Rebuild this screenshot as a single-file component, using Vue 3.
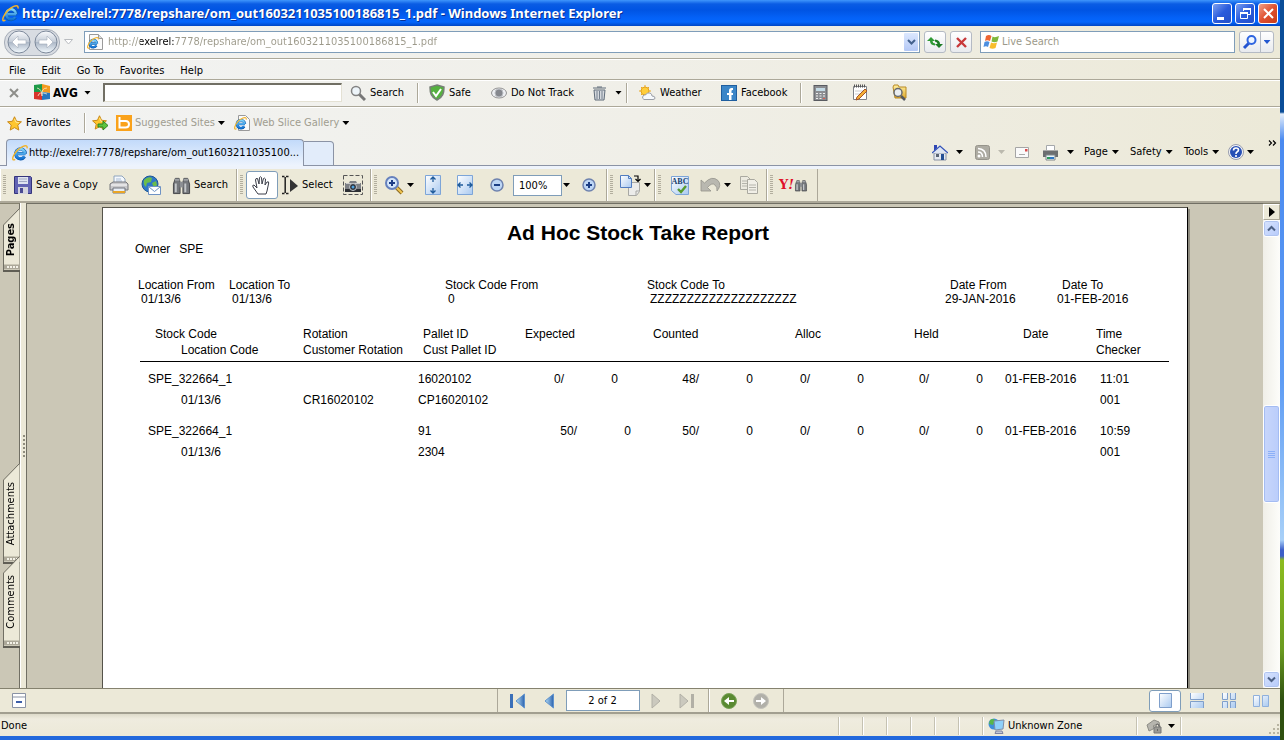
<script setup>
const address = 'http://exelrel:7778/repshare/om_out1603211035100186815_1.pdf'
const menus = ['File', 'Edit', 'Go To', 'Favorites', 'Help']
const filters = [
  { label: 'Location From', value: '01/13/6' },
  { label: 'Location To', value: '01/13/6' },
  { label: 'Stock Code From', value: '0' },
  { label: 'Stock Code To', value: 'ZZZZZZZZZZZZZZZZZZZZ' },
  { label: 'Date From', value: '29-JAN-2016', date: true },
  { label: 'Date To', value: '01-FEB-2016', date: true },
]
const records = [
  { code: 'SPE_322664_1', pallet: '16020102', exp: '0/', inset: true, cnt: '48/', date: '01-FEB-2016', time: '11:01', loc: '01/13/6', rot: 'CR16020102', cust: 'CP16020102', checker: '001' },
  { code: 'SPE_322664_1', pallet: '91', exp: '50/', inset: false, cnt: '50/', date: '01-FEB-2016', time: '10:59', loc: '01/13/6', rot: '', cust: '2304', checker: '001' },
]
const sideTabs = [
  { name: 'Pages', h: 64 },
  { name: 'Attachments', h: 101 },
  { name: 'Comments', h: 92 },
]
</script>

<template>
  <div class="screen">
    <svg class="defs" width="0" height="0" aria-hidden="true">
      <defs>
        <linearGradient id="gBlue" x1="0" y1="0" x2="0" y2="1"><stop offset="0" stop-color="#7fd4fb" /><stop offset="1" stop-color="#1273d4" /></linearGradient>
        <linearGradient id="gPane" x1="0" y1="0" x2="1" y2="1"><stop offset="0" stop-color="#ffffff" /><stop offset="1" stop-color="#a9c9f0" /></linearGradient>
        <linearGradient id="gNav" x1="0" y1="0" x2="1" y2="0"><stop offset="0" stop-color="#b9e2f8" /><stop offset="1" stop-color="#2b62ae" /></linearGradient>
        <linearGradient id="gOrb" x1="0" y1="0" x2="0" y2="1"><stop offset="0" stop-color="#fafbfd" /><stop offset=".48" stop-color="#c5cdd8" /><stop offset=".5" stop-color="#a9b4c4" /><stop offset="1" stop-color="#f4fbff" /></linearGradient>
        <linearGradient id="gFold" x1="0" y1="0" x2="0" y2="1"><stop offset="0" stop-color="#fff0a0" /><stop offset="1" stop-color="#e0a92c" /></linearGradient>
      </defs>
      <symbol id="ie" viewBox="0 0 16 16">
        <path d="M13.400 8.700H5.200M13.400 8.700A4.900 4.900 0 1 0 12.600 11.600" fill="none" stroke="#0b57a8" stroke-width="3.200" />
        <path d="M13.200 8.700H5.200M13.200 8.700A4.700 4.700 0 1 0 12.400 11.400" fill="none" stroke="url(#gBlue)" stroke-width="2.400" />
        <path d="M3.200 14.300C.8 15.900.2 14 1.300 11.300 2.800 7.500 7 2.900 11 1.300c3-1.200 4.600-.4 4 2" fill="none" stroke="#f2b32a" stroke-width="1.400" />
      </symbol>
      <symbol id="star" viewBox="0 0 16 16"><path d="M8 .8l2.200 4.800 5.200.6-3.900 3.500 1.100 5.300L8 12.400 3.400 15l1.100-5.300L.6 6.200l5.200-.6z" fill="#ffc62e" stroke="#c88412" /><path d="M8 3l1.500 3.600 3.300.5" fill="none" stroke="#ffeb9a" /></symbol>
      <symbol id="printer" viewBox="0 0 20 20">
        <path d="M5 8V1h8l3 3v4z" fill="#f4f8fd" stroke="#8fa4bd" /><path d="M7 4h5M7 6h6" stroke="#a9bcd4" />
        <path d="M1 9l3-2h13l2 2v6H1z" fill="#c9c9cb" stroke="#77787c" /><path d="M2 10h16" stroke="#fff" /><path d="M4 13h12v5H4z" fill="#e8eef6" stroke="#71747c" /><path d="M4 17h12" stroke="#e9a526" stroke-width="2" />
      </symbol>
      <symbol id="binoc" viewBox="0 0 20 20">
        <path d="M3.500 2.500h4l1 4v12h-7v-10zM12.500 2.500h4l2 6v10h-7v-12z" fill="#74777b" stroke="#44464a" /><path d="M8 6h4v6H8z" fill="#8b8e92" /><path d="M4 8v9M14 8v9" stroke="#c4c7ca" stroke-width="2" /><path d="M3 4h5M12 4h5" stroke="#9da0a4" stroke-width="2" />
      </symbol>
      <symbol id="lens" viewBox="0 0 20 20"><path d="M12 12l6 6" stroke="#8c6a22" stroke-width="4" /><path d="M12 12l6 6" stroke="#f1c651" stroke-width="2" /><circle cx="8" cy="8" r="6" fill="#d5e6fa" stroke="#6681bd" stroke-width="2" /><path d="M5 8h6M8 5v6" stroke="#1d3d86" stroke-width="2" /></symbol>
    </svg>

    <main class="window">
      <header class="title">
        <svg width="17" height="17"><use href="#ie" /></svg>
        <h1>{{ address }} - Windows Internet Explorer</h1>
        <button class="wbtn" aria-label="Minimize"><svg width="19" height="19"><path d="M4 13h7v3H4z" fill="#fff" /></svg></button>
        <button class="wbtn" aria-label="Restore"><svg width="19" height="19" fill="none" stroke="#fff"><path d="M7.500 7V4.500h7v6H12M4.500 8.500h7v6h-7z" /><path d="M4 9h8M7 5h8" stroke-width="2" /></svg></button>
        <button class="wbtn close" aria-label="Close"><svg width="19" height="19"><path d="M5 5l9 9M14 5l-9 9" stroke="#fff" stroke-width="2" /></svg></button>
      </header>

      <nav class="nav">
        <div class="orbs">
          <button aria-label="Back"><svg width="24" height="24"><circle cx="12" cy="12" r="11" fill="url(#gOrb)" stroke="#7c889a" /><path d="M5 12l6-6v4h8v4h-8v4z" fill="#fff" stroke="#a2abb9" stroke-width=".6" /></svg></button>
          <button aria-label="Forward"><svg width="24" height="24"><circle cx="12" cy="12" r="11" fill="url(#gOrb)" stroke="#7c889a" /><path d="M19 12l-6-6v4H5v4h8v4z" fill="#fff" stroke="#a2abb9" stroke-width=".6" /></svg></button>
        </div>
        <button class="recent" aria-label="Recent pages"><svg width="9" height="6"><path d="M.5.5h8l-4 4.500z" fill="#fff" stroke="#b9bcc0" /></svg></button>
        <div class="field address">
          <svg width="17" height="18"><path d="M2.500 1.500h9l4 4v11h-13z" fill="#fafafa" stroke="#9a9a9a" /><path d="M11.500 1.500v4h4" fill="#ddd" stroke="#9a9a9a" /><use href="#ie" x="0" y="4" width="12" height="12" /></svg>
          <input class="url" :value="address" aria-label="Address">
          <button class="combo" aria-label="Show addresses"><svg width="9" height="6"><path d="M1 1l3.500 3.500L8 1" fill="none" stroke="#43618d" stroke-width="2" /></svg></button>
        </div>
        <button class="sq" aria-label="Refresh"><svg width="18" height="18"><path d="M1 8l4-4 4 4H6.500q0 2 2.500 2.500v2Q4 12 4 8z" fill="#2f9a35" /><path d="M17 11l-4 4-4-4h2.500q0-2-2.500-2.500v-2Q14 7 14 11z" fill="#1d7c25" /></svg></button>
        <button class="sq" aria-label="Stop"><svg width="18" height="18"><path d="M5 5l9 9M14 5l-9 9" stroke="#c8383a" stroke-width="2.400" /></svg></button>
        <div class="field live">
          <svg width="18" height="18"><path d="M3 3q3-2 5.500 0L7 8Q4 6.500 2 8z" fill="#ee6532" /><path d="M9.500 3.500Q12 5 16 3l-1.500 5.500q-3 1.500-6 0z" fill="#7fb83c" /><path d="M1.500 9q2.500-1.500 5 0L5 14q-2-1.500-4.500 0z" fill="#4d8fe0" /><path d="M8 9.500q3 1.500 6 0L12.500 15q-3 1.500-6 0z" fill="#f8bd2c" /></svg>
          <input placeholder="Live Search" aria-label="Live Search">
        </div>
        <div class="find">
          <button aria-label="Search"><svg width="16" height="16"><path d="M2 14l5-5" stroke="#2454d0" stroke-width="3" /><circle cx="9.500" cy="6" r="4" fill="#eef5ff" stroke="#2f65e0" stroke-width="2" /></svg></button>
          <button aria-label="Search options"><i class="caret blue"></i></button>
        </div>
      </nav>

      <nav class="menu"><button v-for="m in menus" :key="m">{{ m }}</button></nav>

      <div class="bar avg">
        <button aria-label="Close toolbar"><svg width="10" height="10"><path d="M1 1l8 8M9 1L1 9" stroke="#8e8e8a" stroke-width="2" /></svg></button>
        <button class="brand"><svg width="17" height="17"><path d="M0 1l8-1v8H0z" fill="#1d9a48" /><path d="M8 0l8 2v7L8 8z" fill="#f39a1e" /><path d="M0 8h8v8l-8-1z" fill="#d8342b" /><path d="M8 8l8 1v6l-8 1z" fill="#2676c0" /><path d="M3 4q5 1 5 8M13 4q-6 0-5 8M4 12q1-5 9-2" fill="none" stroke="#f8e8c8" stroke-width=".8" /></svg><b>AVG</b></button>
        <button aria-label="AVG menu"><i class="caret"></i></button>
        <input class="avginput" aria-label="AVG search">
        <button><svg width="16" height="16"><path d="M9 9l6 6" stroke="#777" stroke-width="3" /><circle cx="6" cy="6" r="4.500" fill="#eef5fa" stroke="#838383" stroke-width="1.500" /></svg>Search</button>
        <i class="sep"></i>
        <button><svg width="16" height="17"><path d="M8 1l7 2c0 6-1 10-7 13C2 13 1 9 1 3z" fill="#55b13f" stroke="#777f77" stroke-width="1.500" /><path d="M4 8l3 4 5-7" fill="none" stroke="#fff" stroke-width="2" /></svg>Safe</button>
        <button><svg width="16" height="14"><ellipse cx="8" cy="7" rx="7.500" ry="5" fill="#eef0f3" stroke="#929292" /><circle cx="8" cy="7" r="4" fill="#85888e" stroke="#bcbfc4" /></svg>Do Not Track</button>
        <button class="spread" aria-label="Clear history"><svg width="15" height="16"><path d="M1 3h13M5 2h5M2 5h11l-1 10H3z" fill="#d5d9de" stroke="#5e6b79" /><path d="M5 6v8M7.500 6v8M10 6v8" stroke="#74808e" /></svg><i class="caret"></i></button>
        <i class="sep"></i>
        <button><svg width="17" height="16"><path d="M6 0v12M0 6h12M2 2l8 8M10 2l-8 8" stroke="#e9a820" /><circle cx="6" cy="6" r="4" fill="#ffce3c" stroke="#e5a31e" /><path d="M5 14.500q-2.500-1-1-3.500 1-1.500 2.500-1 1.500-3 4.500-2 2 .8 2 3 3 0 3 2 0 1.500-2 1.500z" fill="#f7fafd" stroke="#9a9ea6" /></svg>Weather</button>
        <button><svg width="16" height="16"><rect x=".5" y=".5" width="15" height="15" fill="#3b86c8" stroke="#1f5e9e" /><path d="M12 3h-1.500Q8 3 8 5.500V8H6v2h2v5h2.500v-5H12V8h-1.500V6q0-1 1-1h.5z" fill="#fff" /></svg>Facebook</button>
        <i class="sep"></i>
        <button aria-label="Calculator"><svg width="15" height="16"><rect x="1" y=".5" width="13" height="15" fill="#8b8d91" stroke="#595b60" /><path d="M3 3h9v3H3z" fill="#c4dbe6" /><path d="M3 8.500h9M3 11h9M3 13.500h9" stroke="#eee" stroke-dasharray="2 1.500" /><path d="M10 13.500h2" stroke="#e05a4a" /></svg></button>
        <button aria-label="Notes"><svg width="17" height="17"><path d="M1.500 2.500h13v13h-13z" fill="#fff" stroke="#7f8287" /><path d="M2 2h12" stroke="#555" stroke-width="3" stroke-dasharray="1 1" /><path d="M3 7h9M3 10h7" stroke="#ccc" /><path d="M5 13l8-8 2 2-8 8-3 1z" fill="#f4ae35" stroke="#a4552a" /></svg></button>
        <button aria-label="Browse folder"><svg width="17" height="17"><path d="M2 3l1-2h4l1 2h7v11H4z" fill="url(#gFold)" stroke="#b88a25" /><circle cx="7" cy="8.500" r="4" fill="#e9edf0" stroke="#66696f" stroke-width="1.500" /><path d="M10 12l4 4" stroke="#55585e" stroke-width="2.500" /></svg></button>
      </div>

      <div class="bar favs">
        <button class="dark"><svg width="15" height="15"><use href="#star" /></svg>Favorites</button>
        <i class="sep"></i>
        <button aria-label="Add to favorites"><svg width="17" height="16"><use href="#star" width="15" height="15" /><path d="M6 9h5V6l5 4.500-5 4.500v-3H6z" fill="#5ec440" stroke="#2c8420" /></svg></button>
        <button><svg width="16" height="16"><path d="M0 0h16v16H0z" fill="#faa21b" /><path d="M3.500 2v10.500h6q3.500 0 3.500-3.200T9.500 6h-6" fill="none" stroke="#fff" stroke-width="2" /></svg>Suggested Sites<i class="caret"></i></button>
        <button><svg width="16" height="17"><path d="M4.500.5h7l4 4v11h-11z" fill="#fafafa" stroke="#9a9a9a" /><use href="#ie" y="2" width="13" height="13" /></svg>Web Slice Gallery<i class="caret"></i></button>
      </div>

      <div class="tabs">
        <button class="tab"><svg width="16" height="16"><use href="#ie" /></svg><span>http://exelrel:7778/repshare/om_out1603211035100...</span></button>
        <button class="newtab" aria-label="New tab"></button>
        <div class="bar command">
          <button class="spread" aria-label="Home"><svg width="16" height="17"><path d="M2 9h12v7H2z" fill="#e6eaf1" stroke="#8992a4" /><path d="M0 9l8-7 8 7z" fill="#dfe6f2" /><path d="M0 9l8-7 8 7" fill="none" stroke="#3352b8" stroke-width="1.300" /><path d="M2 1h3v3L2 7z" fill="#2f46b4" /><path d="M9 10h3v6H9z" fill="#254f94" /><path d="M4 10h3v3H4z" fill="#5a6474" /></svg><i class="caret"></i></button>
          <button class="spread" aria-label="Feeds"><svg width="15" height="15"><rect x=".5" y=".5" width="14" height="14" rx="2" fill="#aeaca3" stroke="#96948b" /><circle cx="4" cy="11" r="1.500" fill="#fff" /><path d="M3 7q4.500 0 4.500 5M3 3.500q8 .5 8 8.500" fill="none" stroke="#fff" stroke-width="1.500" /></svg><i class="caret pale"></i></button>
          <button aria-label="Read mail"><svg width="14" height="11"><path d="M.5.500h13v10H.5z" fill="#fafafa" stroke="#a5a5a5" /><path d="M4 7.500h6" stroke="#aaa" /><path d="M10 2h2.500v2.500H10z" fill="#d94a4a" /></svg></button>
          <button class="spread" aria-label="Print"><svg width="17" height="17"><path d="M4.500 1.500h8V7h-8z" fill="#fff" stroke="#a5a8ab" /><path d="M1 6h15v7H1z" fill="#6c6e70" /><path d="M1 6.500h15" stroke="#aaa" /><path d="M4 11h9v5H4z" fill="#e9f5fb" stroke="#81868a" /><path d="M5 14h3" stroke="#2a9a5a" stroke-width="2" /><path d="M8 14h4" stroke="#2d75c2" stroke-width="2" /></svg><i class="caret"></i></button>
          <button>Page<i class="caret"></i></button>
          <button>Safety<i class="caret"></i></button>
          <button>Tools<i class="caret"></i></button>
          <button class="tight" aria-label="Help"><svg width="16" height="16"><circle cx="8" cy="8" r="7.500" fill="#f5f5f8" stroke="#969bad" /><circle cx="8" cy="8" r="6" fill="#264fb5" /><path d="M5.500 6.500Q5.500 4 8 4t2.500 2Q10.500 7 9 8q-1 .6-1 2M8 11v2" fill="none" stroke="#fff" stroke-width="1.600" /></svg><i class="caret"></i></button>
          <button class="more" aria-label="More commands"><svg width="9" height="6"><path d="M1 .5L3.500 3 1 5.500M5 .5L7.500 3 5 5.500" fill="none" stroke="#000" stroke-width="1.200" /></svg></button>
        </div>
      </div>

      <div class="pdfbar">
        <div class="seg s1">
          <i class="grip"></i>
          <button><svg width="18" height="18"><path d="M.5.5h16l1 1v16H.5z" fill="#6364b4" stroke="#35357c" /><path d="M4 1h10v7H4z" fill="#dfe4f0" /><path d="M5 3h8M5 5.500h8" stroke="#a2a9c4" /><path d="M4 11h10v7H4z" fill="#d5d5de" /><path d="M6 12h3v5H6z" fill="#4a4a92" /></svg>Save a Copy</button>
          <button aria-label="Print document"><svg width="20" height="20"><use href="#printer" /></svg></button>
          <button aria-label="Email"><svg width="21" height="21"><circle cx="9" cy="9" r="8" fill="#2f78c8" stroke="#1d5794" /><path d="M3 5q4-4 8-2l-1 4-4 1-1 4q-3-2-2-7zM11 8l4-2 1 4-3 3z" fill="#6cbd4b" /><path d="M7.500 11.500h12v8h-12z" fill="#fff" stroke="#6f93c4" /><path d="M8 12l5.500 4.500L19 12" fill="none" stroke="#6f93c4" /></svg></button>
          <button class="tight"><svg width="19" height="19"><use href="#binoc" /></svg>Search</button>
        </div>
        <div class="seg s2">
          <i class="grip"></i>
          <button class="picked" aria-label="Hand tool"><svg width="20" height="21"><path d="M6 19l-5-7q-1-2 1-2l3 3-1.500-8q0-2 2-1.500L7 9l.5-6.500q1-1.500 2 0L10 9l1.500-5.500q1.200-1 2 .5L13 10l2-3q2-.8 1.700 1L15 16l-1 3z" fill="#fff" stroke="#3a3d48" /></svg></button>
          <button class="tight"><svg width="18" height="20"><path d="M1 1.500h2.500M5 1.500h2.500M1 18.500h2.500M5 18.500h2.500M4.200 2v16" stroke="#222" stroke-width="1.500" /><path d="M9 4l8 7-8 6z" fill="#333" /></svg>Select</button>
          <button aria-label="Snapshot"><svg width="20" height="20"><path d="M.5.5h19v19H.5z" fill="none" stroke="#555" stroke-dasharray="4 2" /><path d="M2 8h4l1-2h6l1 2h4v9H2z" fill="#7d8085" /><path d="M2 15.500h16" stroke="#2c2f34" stroke-width="3" /><path d="M3 8.500h14" stroke="#ccc" /><circle cx="10" cy="12" r="3.500" fill="#2c3038" stroke="#c5c8cc" /><circle cx="10" cy="12" r="1.500" fill="#4fa3e0" /></svg></button>
        </div>
        <div class="seg s3">
          <i class="grip"></i>
          <button class="tight" aria-label="Zoom in tool"><svg width="20" height="20"><use href="#lens" /></svg><i class="caret"></i></button>
          <button aria-label="Fit height"><svg width="16" height="20"><path d="M.5.5h15v19H.5z" fill="url(#gPane)" stroke="#7da5d8" /><path d="M8 2v5M8 13v5M5.500 4.500L8 2l2.500 2.500M5.500 15.500L8 18l2.500-2.500" fill="none" stroke="#1d5a9a" stroke-width="1.300" /></svg></button>
          <button aria-label="Fit width"><svg width="16" height="20"><path d="M.5.5h15v19H.5z" fill="url(#gPane)" stroke="#7da5d8" /><path d="M1 10h5M10 10h5M3.500 7.500L1 10l2.500 2.500M12.500 7.500L15 10l-2.500 2.500" fill="none" stroke="#1d5a9a" stroke-width="1.300" /></svg></button>
          <button aria-label="Zoom out"><svg width="14" height="14"><circle cx="7" cy="7" r="6" fill="#bdd6f5" stroke="#6e82ae" stroke-width="1.500" /><path d="M4 7h6" stroke="#1b3e85" stroke-width="2" /></svg></button>
          <input class="zoom" value="100%" aria-label="Zoom level">
          <button aria-label="Zoom presets"><i class="caret"></i></button>
          <button aria-label="Zoom in"><svg width="14" height="14"><circle cx="7" cy="7" r="6" fill="#bdd6f5" stroke="#6e82ae" stroke-width="1.500" /><path d="M4 7h6M7 4v6" stroke="#1b3e85" stroke-width="2" /></svg></button>
        </div>
        <div class="seg s4">
          <i class="grip"></i>
          <button class="tight" aria-label="Rotate pages"><svg width="21" height="21"><path d="M8.500 7.500h11v9l-3 4h-8z" fill="#ececea" stroke="#a8a8a4" /><path d="M16 20v-4h3" fill="none" stroke="#a8a8a4" /><path d="M.5.500h8l3 3v9H.5z" fill="url(#gPane)" stroke="#517cc0" /><path d="M8.500.5v3h3" fill="none" stroke="#517cc0" /><path d="M14 1h4v5M15.500 4L18 6.500 20.500 4" fill="none" stroke="#000" stroke-width="1.200" /></svg><i class="caret"></i></button>
        </div>
        <div class="seg s5">
          <i class="grip"></i>
          <button aria-label="Check spelling"><svg width="18" height="19"><path d="M.5.5h17v18H5l-4.500-4z" fill="url(#gPane)" stroke="#7da5d8" /><text x="9" y="8" text-anchor="middle" font-family="Liberation Serif" font-weight="700" font-size="8" fill="#16406c">ABC</text><path d="M7 13l3 3 5-6" fill="none" stroke="#569a2c" stroke-width="2.400" /></svg></button>
          <button class="tight" aria-label="Undo"><svg width="21" height="16"><path d="M1 3v11h10L7.500 10.500Q12 5 15 8q2.500 2 2 6 5-6 1-10.500Q12-2 4.500 6z" fill="#b9b8b0" stroke="#94938b" stroke-width=".8" /></svg><i class="caret"></i></button>
          <button aria-label="Copy"><svg width="19" height="18"><path d="M.5.500h7l3 3v10H.5z" fill="#eceae0" stroke="#aaa9a0" /><path d="M7.500 3.500h7l3 3v11h-10z" fill="#f1efe7" stroke="#aaa9a0" /><path d="M2 5h5M2 7.500h5M2 10h5M9 9h7M9 11.500h7M9 14h7" stroke="#b5b4ac" /></svg></button>
        </div>
        <div class="seg s6">
          <i class="grip"></i>
          <button class="yahoo" aria-label="Yahoo search"><b>Y</b><em>!</em><svg width="14" height="13"><use href="#binoc" /></svg></button>
        </div>
      </div>

      <section class="body">
        <aside class="side">
          <button v-for="t in sideTabs" :key="t.name" class="sidetab" :class="t.name.toLowerCase()">
            <svg width="18" :height="t.h">
              <path :d="`M17.500 1L1.500 17V${t.h - 2}H17.500z`" fill="#ece9d8" />
              <path :d="`M2 ${t.h - 5}H18`" stroke="#aca899" stroke-width="5" />
              <path :d="`M5 ${t.h - 5}H16`" stroke="#f4f2e8" stroke-width="2" stroke-dasharray="2 1" />
              <path :d="`M17.500 .5L1.500 17V${t.h - 2}`" fill="none" stroke="#716f64" />
              <path :d="`M1 ${t.h - 1}H18`" stroke="#605e55" stroke-width="2" />
            </svg>
            <span>{{ t.name }}</span>
          </button>
        </aside>
        <div class="splitter"><svg width="4" height="28"><path d="M2 3v22" stroke="#8f8c7e" stroke-width="2" stroke-dasharray="2 2" /></svg></div>
        <div class="viewer">
          <article class="page">
            <h2>Ad Hoc Stock Take Report</h2>
            <p class="owner"><span>Owner</span><span>SPE</span></p>
            <dl class="filters">
              <div v-for="f in filters" :key="f.label" :class="{ date: f.date }"><dt>{{ f.label }}</dt><dd>{{ f.value }}</dd></div>
            </dl>
            <table>
              <colgroup>
                <col class="w163"><col class="w115"><col class="w102"><col class="w57"><col class="w54"><col class="w68"><col class="w54"><col class="w57"><col class="w54"><col class="w65"><col class="w54"><col class="w113"><col>
              </colgroup>
              <thead>
                <tr><th class="p15">Stock Code</th><th>Rotation</th><th class="p5">Pallet ID</th><th colspan="2" class="p5">Expected</th><th colspan="2" class="p22">Counted</th><th colspan="2" class="p42">Alloc</th><th colspan="2" class="p50">Held</th><th class="p40">Date</th><th>Time</th></tr>
                <tr><th class="p41">Location Code</th><th>Customer Rotation</th><th class="p5">Cust Pallet ID</th><th colspan="9"></th><th>Checker</th></tr>
              </thead>
              <tbody v-for="(r, i) in records" :key="i">
                <tr>
                  <td class="p8">{{ r.code }}</td><td></td><td>{{ r.pallet }}</td>
                  <td class="num" :class="{ inset: r.inset }">{{ r.exp }}</td><td class="num" :class="{ inset: r.inset }">0</td>
                  <td class="num">{{ r.cnt }}</td><td class="num">0</td><td class="num">0/</td><td class="num">0</td><td class="num">0/</td><td class="num">0</td>
                  <td class="p22">{{ r.date }}</td><td class="p4">{{ r.time }}</td>
                </tr>
                <tr><td class="p41">{{ r.loc }}</td><td>{{ r.rot }}</td><td>{{ r.cust }}</td><td colspan="9"></td><td class="p4">{{ r.checker }}</td></tr>
              </tbody>
            </table>
          </article>
        </div>
        <div class="scroll">
          <button class="flat" aria-label="Expand"><svg width="8" height="10"><path d="M1 0l6 5-6 5z" /></svg></button>
          <button class="sb" aria-label="Scroll up"><svg width="9" height="7"><path d="M1 5.500L4.500 2 8 5.500" fill="none" stroke="#4d6185" stroke-width="2" /></svg></button>
          <i class="above"></i>
          <div class="thumb"><i></i><i></i><i></i><i></i></div>
          <i class="below"></i>
          <button class="sb" aria-label="Scroll down"><svg width="9" height="7"><path d="M1 1.500L4.500 5 8 1.500" fill="none" stroke="#4d6185" stroke-width="2" /></svg></button>
        </div>
      </section>

      <div class="pager">
        <button class="hide" aria-label="Hide toolbars"><svg width="14" height="15"><path d="M.5.5h13v14H.5z" fill="#fff" stroke="#8a93a5" /><path d="M1 4h12" stroke="#8a93a5" /><path d="M4 9h6" stroke="#3d5fa8" stroke-width="2" /></svg></button>
        <div class="pages">
          <button aria-label="First page"><svg width="18" height="16"><path d="M1 1h3v14H1z" fill="#3a6fb8" /><path d="M15.500 1v14L7 8z" fill="url(#gNav)" stroke="#5f92cc" /></svg></button>
          <button aria-label="Previous page"><svg width="10" height="16"><path d="M9.500 1v14L1 8z" fill="url(#gNav)" stroke="#5f92cc" /></svg></button>
          <input value="2 of 2" aria-label="Page number">
          <button aria-label="Next page"><svg width="10" height="16"><path d="M1 1v14l8-7z" fill="#cbc9be" stroke="#b2b0a6" /></svg></button>
          <button aria-label="Last page"><svg width="16" height="16"><path d="M1 1v14l8-7z" fill="#cbc9be" stroke="#b2b0a6" /><path d="M12 1h3v14h-3z" fill="#b2b0a6" /></svg></button>
          <i class="sep tall"></i>
          <button aria-label="Previous view"><svg width="16" height="16"><circle cx="8" cy="8" r="7.500" fill="#5a8a32" stroke="#7ba35a" /><path d="M3 8l5-4v3h5v2H8v3z" fill="#fff" /></svg></button>
          <button aria-label="Next view"><svg width="16" height="16"><circle cx="8" cy="8" r="7.500" fill="#b1b0a9" stroke="#c5c4bc" /><path d="M13 8L8 4v3H3v2h5v3z" fill="#fff" /></svg></button>
        </div>
        <div class="views">
          <button class="picked" aria-label="Single page"><svg width="13" height="15"><path d="M.5.5h12v14H.5z" fill="url(#gPane)" stroke="#7f9fcb" /></svg></button>
          <button aria-label="Continuous"><svg width="14" height="15" fill="url(#gPane)" stroke="#7f9fcb"><path d="M.5 0v6.500h13V0M.5 15V8.500h13V15" /></svg></button>
          <button aria-label="Continuous facing"><svg width="14" height="15" fill="url(#gPane)" stroke="#7f9fcb"><path d="M.5 0v6.500h5V0M8.500 0v6.500h5V0M.5 15V8.500h5V15M8.500 15V8.500h5V15" /></svg></button>
          <button aria-label="Facing"><svg width="16" height="12" fill="url(#gPane)" stroke="#8fb0dc"><path d="M.5.5h6v11h-6zM9.500.5h6v11h-6z" /></svg></button>
        </div>
      </div>

      <footer class="status">
        <span class="done">Done</span>
        <i v-for="n in 6" :key="n" class="cell"></i>
        <span class="cell zone"><svg width="17" height="17"><circle cx="6" cy="6" r="5.500" fill="#3d8edc" /><path d="M2 2q3-2 5 0l-2 5-4-1z" fill="#58b64a" /><path d="M6 3l10-1-1 9-8 1z" fill="#8fd0fa" stroke="#7d8ea9" /><path d="M8 13h6l1 2.500H7z" fill="#c3c8d6" stroke="#7d83a0" /></svg>Unknown Zone</span>
        <button class="cell guard" aria-label="Protected mode"><svg width="17" height="15"><path d="M1 6l7-5 5 2 1 5-3-3-4 2 2 2-6 3z" fill="#b6b5ae" stroke="#8e8d86" /><path d="M8 8h7v6H8z" fill="#9b9a94" stroke="#777" /><path d="M10 8V6q1.500-2 3 0v2M11.500 10v2" fill="none" stroke="#666" /></svg><i class="caret"></i></button>
        <span class="cell last"><svg width="11" height="11" fill="#b8b4a2"><path d="M8 0h2v2H8zM8 4h2v2H8zM8 8h2v2H8zM4 4h2v2H4zM4 8h2v2H4zM0 8h2v2H0z" /></svg></span>
      </footer>
    </main>
    <div class="desktop"></div>
  </div>
</template>

<style>
body { margin: 0; }
</style>

<style scoped>
* { box-sizing: border-box; }
.screen { display: flex; height: 100vh; min-height: 500px; overflow: hidden; font: 11px/14px "DejaVu Sans Condensed", "DejaVu Sans", sans-serif; color: #000; }
.defs { position: absolute; }
.window { flex: 1; min-width: 0; display: flex; flex-direction: column; background: linear-gradient(90deg, #f2f3f3, #f0efe8 50%, #ece9d8); border-bottom: 4px solid #2268dc; }
.desktop { width: 4px; background: linear-gradient(#0a4d98 0 112px, #e4eefa 114px, #4a8af0 140px, #5e9cf4 380px, #a8d0f8 540px, #3c5ec8 550px 556px, #8cbc20 560px, #6a9a20 650px, #2e5010 700px); }
button { border: 0; padding: 0; background: none; font: inherit; color: inherit; display: flex; align-items: center; gap: 4px; white-space: nowrap; text-align: left; }
input { font: inherit; color: inherit; border: 0; padding: 0; background: none; min-width: 0; outline: 0; }
svg { display: block; flex: none; }
.caret { flex: none; width: 7px; height: 4px; background: #000; clip-path: polygon(0 0, 100% 0, 50% 100%); }
.caret.blue { background: #2458d0; }
.caret.pale { background: #bbb9ae; }
.sep { width: 2px; height: 20px; background: #aca899; border-right: 1px solid #fff; }
.sep.tall { height: 23px; }
.bar { display: grid; align-items: center; }

.title { height: 26px; flex: none; display: flex; align-items: center; gap: 3px; padding: 0 2px; background: linear-gradient(#3f96fc, #0a5ce4 4px, #0054e3 10px, #0462f8 18px, #0466fc 22px, #0046c4); }
.title h1 { flex: 1; margin: 0; font: bold 13px/18px "Noto Sans", "DejaVu Sans Condensed", sans-serif; color: #fff; text-shadow: 1px 1px #0a2f90; white-space: nowrap; overflow: hidden; }
.wbtn { width: 20px; height: 21px; border: 1px solid #fff; border-radius: 3px; background: linear-gradient(135deg, #7da0f0, #2a5cdc 50%, #2450c8); }
.wbtn.close { background: linear-gradient(135deg, #f0a088, #e05030 50%, #c83c18); }

.nav { height: 33px; flex: none; display: flex; align-items: center; gap: 4px; padding: 0 6px 0 4px; border-bottom: 1px solid #aca899; }
.orbs { width: 56px; height: 27px; display: flex; align-items: center; justify-content: space-around; border: 1px solid #a6adb8; border-radius: 13px; background: #d8dce2; }
.orbs button { width: 24px; }
.recent { width: 16px; }
.field { height: 22px; display: flex; align-items: center; gap: 4px; padding: 0 1px 0 2px; background: #fff; border: 1px solid #7f9db9; }
.address { flex: 1; }
.field input { flex: 1; }
.url { -webkit-text-fill-color: transparent; background: linear-gradient(90deg, #9c998a 0 32px, #000 32px 67px, #9c998a 67px) text; }
.combo { width: 14px; height: 18px; justify-content: center; background: linear-gradient(#dce8fe, #b4c8f6); border-radius: 1px; }
.sq { width: 22px; height: 22px; justify-content: center; border: 1px solid #b4bac4; border-radius: 3px; background: linear-gradient(#fff, #e8eaee); }
.live { width: 255px; margin-left: 4px; gap: 1px; }
.live input::placeholder { color: #9c998a; opacity: 1; }
.find { width: 35px; height: 22px; display: flex; border: 1px solid #b4bac4; border-radius: 3px; background: linear-gradient(#fff, #e8eaee); }
.find button { flex: 1; justify-content: center; }
.find button:first-child { flex: none; width: 21px; border-right: 1px solid #b4bac4; }

.menu { height: 21px; flex: none; display: flex; align-items: center; gap: 16px; padding: 2px 0 0 9px; border-top: 1px solid #fff; border-bottom: 1px solid #aca899; }
.avg { height: 27px; flex: none; padding: 0 0 2px 9px; grid-template-columns: 25px 50px 19px 247px 67px 12px 62px 101px 34px 13px 82px 79px 13px 39px 39px 1fr; border-top: 1px solid #fff; border-bottom: 1px solid #aca899; }
.brand { gap: 2px; }
.brand b { font-size: 12px; }
.avginput { width: 239px; height: 19px; background: #fff; border: 1px solid #e4e1d4; border-top: 2px solid #716f64; border-left: 2px solid #716f64; }
.spread { gap: 8px; }
.tight { gap: 3px; }
.favs { height: 31px; flex: none; padding-left: 7px; grid-template-columns: 77px 8px 24px 118px 1fr; border-top: 1px solid #fff; color: #a09d90; }
.favs button { gap: 3px; }
.favs .dark { color: #000; gap: 4px; }

.tabs { height: 31px; flex: none; display: flex; align-items: flex-end; padding-left: 6px; border-bottom: 3px solid #eef3fb; box-shadow: inset 0 -1px #8b93a5; }
.tab { width: 298px; height: 27px; padding-left: 5px; gap: 1px; border: 1px solid #8b93a5; border-bottom: 0; border-radius: 4px 4px 0 0; background: linear-gradient(#c2dafa, #eef4fd); }
.tab span { overflow: hidden; text-overflow: clip; }
.newtab { width: 30px; height: 25px; border: 1px solid #8b93a5; border-left: 0; border-radius: 0 4px 0 0; background: #e2ecfa; }
.command { margin-left: auto; height: 28px; grid-template-columns: 43px 40px 27px 42px 46px 54px 44px 40px 12px; }
.command .more { align-self: start; padding-top: 2px; }

.pdfbar { height: 34px; flex: none; display: flex; background: #ece9d8; border-bottom: 2px solid #aca899; }
.seg { display: grid; align-items: center; border-left: 1px solid #fff; border-right: 1px solid #aca899; }
.grip { width: 3px; height: 20px; background: repeating-linear-gradient(#b2ae9e 0 1px, #ece9d8 1px 2px); }
.s1 { width: 237px; padding-left: 2px; grid-template-columns: 11px 95px 32px 31px 1fr; }
.s2 { width: 134px; padding-left: 2px; grid-template-columns: 6px 35px 62px 1fr; }
.s3 { width: 236px; padding-left: 2px; grid-template-columns: 10px 41px 32px 33px 23px 50px 19px 1fr; }
.s4 { width: 48px; padding-left: 2px; grid-template-columns: 10px 1fr; }
.s5 { width: 112px; padding-left: 2px; grid-template-columns: 13px 29px 40px 1fr; }
.s6 { width: 51px; padding-left: 2px; grid-template-columns: 9px 1fr; }
.picked { width: 32px; height: 28px; justify-content: center; background: #fff; border: 1px solid #7f9db9; border-radius: 3px; }
.zoom { width: 49px; height: 21px; padding-left: 5px; background: #fff; border: 1px solid #7f9db9; }
.yahoo { gap: 0; color: #e0102a; font: bold 13px/18px "DejaVu Serif", serif; }

.body { flex: 1; min-height: 0; display: flex; background: #cbc7b6; border-bottom: 1px solid #85826f; }
.side { width: 20px; display: flex; flex-direction: column; padding: 4px 0 40px 2px; border-right: 1px solid #716f64; border-top: 1px solid #85826f; }
.sidetab { width: 18px; display: grid; place-items: center; }
.sidetab > * { grid-area: 1 / 1; }
.sidetab span { writing-mode: vertical-rl; transform: rotate(180deg); }
.pages.sidetab { font-weight: bold; }
.attachments { margin-top: auto; }
.comments { margin-top: -8px; }
.splitter { width: 6px; display: grid; place-items: center; background: #ece9d8; border-left: 1px solid #fff; }
.viewer { flex: 1; min-width: 0; overflow: hidden; display: flex; border-left: 1px solid #716f64; border-top: 1px solid #716f64; padding: 3px 75px 0 75px; }
.page { flex: 1; min-width: 0; background: #fff; border: 1px solid #55534a; border-right: 1px solid #000; border-bottom: 0; box-shadow: 2px 2px #8f8c80; font: 12px/14px "Liberation Sans", Arial, sans-serif; }
.page h2 { margin: 14px 0 0; padding-right: 14px; font-size: 21px; line-height: 22px; text-align: center; }
.owner { display: flex; gap: 9px; margin: -2px 0 22px 32px; }
.filters { display: grid; grid-template-columns: 91px 216px 202px 298px 112px 1fr; margin: 0 0 20px 35px; }
.filters dd { margin: 0; padding-left: 3px; }
.filters .date dt { padding-left: 5px; }
.filters .date dd { padding: 0; }
table { width: calc(100% - 55px); margin-left: 37px; table-layout: fixed; border-collapse: collapse; }
th, td { padding: 0; font-weight: normal; text-align: left; white-space: nowrap; height: 16px; }
thead tr:last-child th { height: 19px; padding-bottom: 3px; border-bottom: 1px solid #000; }
td { height: 21px; }
tbody tr:first-child td { height: 31px; padding-top: 10px; }
thead + tbody tr:first-child td { height: 28px; padding-top: 7px; }
.num { text-align: right; }
.num.inset { padding-right: 13px; }
.w163 { width: 163px; } .w115 { width: 115px; } .w102 { width: 102px; } .w57 { width: 57px; } .w54 { width: 54px; } .w65 { width: 65px; } .w68 { width: 68px; } .w113 { width: 113px; }
.p4 { padding-left: 4px; } .p5 { padding-left: 5px; } .p8 { padding-left: 8px; } .p15 { padding-left: 15px; } .p22 { padding-left: 22px; } .p40 { padding-left: 40px; } .p41 { padding-left: 41px; } .p42 { padding-left: 42px; } .p50 { padding-left: 50px; }

.scroll { width: 17px; display: flex; flex-direction: column; background: linear-gradient(90deg, #f0efe8, #fdfdfa); border-top: 1px solid #85826f; }
.scroll .flat { height: 16px; justify-content: center; background: #ece9d8; border: 1px solid #fff; border-right-color: #aca899; border-bottom-color: #aca899; }
.sb { height: 17px; justify-content: center; border: 1px solid #fff; border-radius: 3px; background: linear-gradient(135deg, #d8e4fe, #b6cafa); box-shadow: inset 0 0 0 1px #b0c4f0; }
.above { flex: 170; }
.below { flex: 170; }
.thumb { flex: 96; border: 1px solid #fff; border-radius: 3px; background: linear-gradient(90deg, #c8d6fb, #bacdfb); box-shadow: inset 0 0 0 1px #a4bcf2; display: flex; flex-direction: column; align-items: center; justify-content: center; gap: 1px; }
.thumb i { width: 7px; height: 1px; background: #8cb0f8; }

.pager { height: 25px; flex: none; display: grid; grid-template-columns: 1fr 287px 1fr; align-items: stretch; background: #ece9d8; border-bottom: 2px solid #a29f90; }
.hide { padding-left: 12px; }
.pager .pages { display: grid; align-items: center; grid-template-columns: 35px 22px 85px 28px 29px 13px 32px 1fr; padding-left: 11px; border-left: 1px solid #aca899; border-right: 1px solid #aca899; }
.pages input { width: 74px; height: 21px; text-align: center; background: #fff; border: 1px solid #7f9db9; }
.views { display: grid; align-items: center; justify-content: end; grid-template-columns: 41px 32px 31px 27px; }
.views .picked { height: 22px; }

.status { height: 22px; flex: none; display: flex; align-items: center; padding: 2px 0 0 1px; background: linear-gradient(#dedbca, #efecdf 5px, #ece9d8); }
.done { flex: 1; }
.cell { flex: none; width: 24px; height: 18px; display: flex; align-items: center; gap: 3px; border-left: 1px solid #c5c2b2; box-shadow: inset 1px 0 #fff; padding-left: 5px; }
.zone { width: 154px; }
.guard { width: 44px; padding-left: 9px; gap: 5px; }
.last { width: 100px; justify-content: flex-end; align-items: flex-end; }
</style>
